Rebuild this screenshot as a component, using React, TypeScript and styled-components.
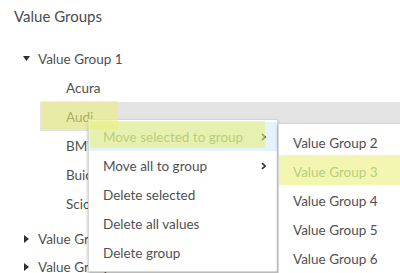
import React from "react";
import styled, { createGlobalStyle } from "styled-components";

const GlobalStyle = createGlobalStyle`
  html, body { margin: 0; padding: 0; background: #ffffff; }
  body { font-family: Lato, "Open Sans", "Liberation Sans", sans-serif; }
  * { box-sizing: border-box; }
`;

const Stage = styled.div`
  position: relative;
  width: 400px;
  height: 273px;
  overflow: hidden;
  background: #ffffff;
  color: #505050;
`;

const Panel = styled.div`
  padding: 6px 0 0 14px;
`;

const Title = styled.div`
  font-size: 15px;
  line-height: 20px;
  height: 20px;
  margin-bottom: 18px;
  color: #4c4c4c;
`;

const Tree = styled.div`
  display: flex;
  flex-direction: column;
`;

const Group = styled.div<{ $open?: boolean }>`
  display: flex;
  flex-direction: column;
  margin-bottom: ${(p) => (p.$open ? 7 : 0)}px;
`;

const GroupHeader = styled.div<{ $open?: boolean }>`
  display: flex;
  align-items: center;
  height: ${(p) => (p.$open ? 29 : 28)}px;
  padding-left: 9px;
  gap: 8px;
  font-size: 13.5px;
  white-space: nowrap;
`;

const CaretBox = styled.span`
  display: inline-flex;
  width: 7px;
  justify-content: center;
  align-items: center;
`;

const Values = styled.div`
  display: flex;
  flex-direction: column;
  margin-left: 26px;
`;

const ValueRow = styled.div<{ $selected?: boolean }>`
  height: 29px;
  display: flex;
  align-items: center;
  padding-left: 26px;
  font-size: 13.5px;
  background: ${(p) => (p.$selected ? "#e4e4e4" : "transparent")};
`;

const Menu = styled.div<{ $left: number; $top: number; $width: number }>`
  position: absolute;
  left: ${(p) => p.$left}px;
  top: ${(p) => p.$top}px;
  width: ${(p) => p.$width}px;
  background: #ffffff;
  border: 1px solid #d6d6d6;
  box-shadow: 0 2px 3px rgba(0, 0, 0, 0.32);
  display: flex;
  flex-direction: column;
`;

const MainMenu = styled(Menu)`
  padding: 2px 0 4px;
`;

const SubMenu = styled(Menu)`
  padding: 4px 0;
`;

const MenuItem = styled.div<{ $active?: boolean; $hover?: boolean }>`
  height: 29px;
  display: flex;
  align-items: center;
  justify-content: space-between;
  padding: 0 11px 0 14px;
  font-size: 13.5px;
  white-space: nowrap;
  color: ${(p) => (p.$active ? "#6e9f7c" : "#505050")};
  background: ${(p) => (p.$hover ? "#e3f2fb" : "transparent")};
`;

const Highlight = styled.div<{ $left: number; $top: number; $w: number; $h: number }>`
  position: absolute;
  left: ${(p) => p.$left}px;
  top: ${(p) => p.$top}px;
  width: ${(p) => p.$w}px;
  height: ${(p) => p.$h}px;
  background: rgba(234, 240, 120, 0.58);
  pointer-events: none;
`;

const Chevron = () => (
  <svg width="5" height="8" viewBox="0 0 5 8">
    <path d="M1 1 L4 4 L1 7" fill="none" stroke="#2f2f2f" strokeWidth="1.6" />
  </svg>
);

const Caret = ({ open }: { open: boolean }) => (
  <CaretBox>
    {open ? (
      <svg width="7" height="5" viewBox="0 0 7 5">
        <path d="M0 0 H7 L3.5 5 Z" fill="#2f2f2f" />
      </svg>
    ) : (
      <svg width="5" height="8" viewBox="0 0 5 8">
        <path d="M0 0 V8 L5 4 Z" fill="#2f2f2f" />
      </svg>
    )}
  </CaretBox>
);

const values = ["Acura", "Audi", "BMW", "Buick", "Scion"];
const menuItems = [
  { label: "Move selected to group", sub: true, active: true },
  { label: "Move all to group", sub: true },
  { label: "Delete selected" },
  { label: "Delete all values" },
  { label: "Delete group" },
];
const subItems = ["Value Group 2", "Value Group 3", "Value Group 4", "Value Group 5", "Value Group 6"];

export default function App() {
  return (
    <Stage>
      <GlobalStyle />
      <Panel>
        <Title>Value Groups</Title>
        <Tree>
          <Group $open>
            <GroupHeader $open>
              <Caret open />
              Value Group 1
            </GroupHeader>
            <Values>
              {values.map((v) => (
                <ValueRow key={v} $selected={v === "Audi"}>
                  {v}
                </ValueRow>
              ))}
            </Values>
          </Group>
          <Group>
            <GroupHeader>
              <Caret open={false} />
              Value Group 2
            </GroupHeader>
          </Group>
          <Group>
            <GroupHeader>
              <Caret open={false} />
              Value Group 3
            </GroupHeader>
          </Group>
        </Tree>
      </Panel>

      <MainMenu $left={88} $top={119} $width={190}>
        {menuItems.map((m) => (
          <MenuItem key={m.label} $active={m.active} $hover={m.active}>
            <span>{m.label}</span>
            {m.sub && <Chevron />}
          </MenuItem>
        ))}
      </MainMenu>

      <SubMenu $left={278} $top={123} $width={140}>
        {subItems.map((s) => (
          <MenuItem key={s} $active={s === "Value Group 3"}>
            <span>{s}</span>
          </MenuItem>
        ))}
      </SubMenu>

      <Highlight $left={41} $top={101} $w={77} $h={28} />
      <Highlight $left={90} $top={121} $w={175} $h={27} />
      <Highlight $left={279} $top={155} $w={121} $h={30} />
    </Stage>
  );
}
